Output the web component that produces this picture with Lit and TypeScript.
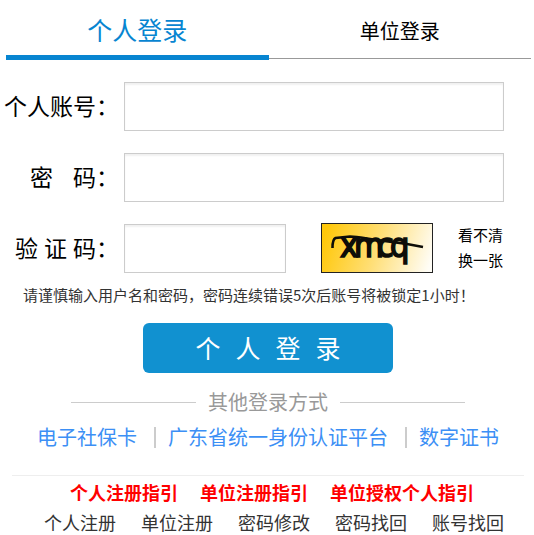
import { LitElement, html, css } from "lit";
import { customElement, state } from "lit/decorators.js";

@customElement("captcha-image")
class CaptchaImage extends LitElement {
  static styles = css`
    :host {
      display: block;
      width: 112px;
      height: 50px;
    }
    .picture {
      display: block;
      width: 100%;
      height: 100%;
    }
    .code {
      font-family: "DejaVu Sans Condensed", "DejaVu Sans", sans-serif;
      font-size: 34px;
      font-stretch: condensed;
      fill: #0d0d08;
      stroke: #0d0d08;
      stroke-width: 1.6;
    }
  `;

  render() {
    return html`
      <svg class="picture" viewBox="0 0 112 50" role="img" aria-label="验证码图片">
        <defs>
          <linearGradient id="gold" gradientUnits="userSpaceOnUse" x1="4" y1="10" x2="108" y2="44">
            <stop offset="0" stop-color="#ffc80a" />
            <stop offset="0.5" stop-color="#ffdf78" />
            <stop offset="1" stop-color="#fffdf6" />
          </linearGradient>
        </defs>
        <rect x="0.5" y="0.5" width="111" height="49" fill="url(#gold)" stroke="#222" />
        <text class="code" x="19 33 56 69" y="34">xmcq</text>
        <path
          d="M11.5 25 C11.5 20 12 16 14.5 15 L29 13.500 C38 13.500 44 15.500 56 17 L86 21 L102 24"
          fill="none"
          stroke="#0d0d08"
          stroke-width="2.6"
        />
      </svg>
    `;
  }
}

@customElement("app-root")
class AppRoot extends LitElement {
  @state() private tab = "person";

  static styles = css`
    :host {
      display: block;
      background: #fff;
      color: #000;
      font-family: "Noto Sans CJK SC", sans-serif;
    }
    * {
      box-sizing: border-box;
    }
    button {
      margin: 0;
      padding: 0;
      border: 0;
      background: none;
      color: inherit;
      font-family: inherit;
      cursor: pointer;
    }
    a {
      color: inherit;
      text-decoration: none;
      white-space: nowrap;
    }
    .tabs {
      display: flex;
      align-items: flex-start;
      height: 60px;
      padding: 0 3px 0 6px;
    }
    .tab {
      flex: 1;
      height: 59px;
      padding-top: 2px;
      border-bottom: 1px solid #999;
      font-size: 20px;
    }
    .tab.active {
      height: 60px;
      border-bottom: 5px solid #0785d1;
      color: #0785d1;
      font-size: 25px;
    }
    .form {
      display: flex;
      flex-direction: column;
      gap: 22px;
      padding: 22px 30px 0 5px;
    }
    .row {
      display: flex;
      align-items: center;
      height: 49px;
    }
    .label {
      display: flex;
      justify-content: flex-end;
      flex: none;
      width: 114px;
      margin-right: 5px;
      padding-bottom: 4px;
      font-size: 23px;
      line-height: 32px;
      white-space: nowrap;
    }
    .label.two {
      gap: 20px;
    }
    .label.three {
      gap: 6px;
    }
    .field {
      flex: 1;
      min-width: 0;
      height: 49px;
      padding: 0 10px;
      border: 1px solid #ccc;
      border-radius: 0;
      background: #fff;
      box-shadow: inset 0 2px 2px rgba(0, 0, 0, 0.06);
      font-family: inherit;
      font-size: 20px;
      outline: none;
    }
    .captcha {
      flex: none;
      align-self: flex-end;
      margin: 0 25px 0 35px;
    }
    .refresh {
      width: 46px;
      padding-bottom: 4px;
      font-size: 15px;
      line-height: 25px;
      text-align: left;
    }
    .notice {
      margin: 11px 0 17px;
      padding-left: 23px;
      color: #333;
      font-size: 15px;
      line-height: 22px;
    }
    .submit {
      display: flex;
      align-items: center;
      justify-content: center;
      gap: 15px;
      width: 250px;
      height: 50px;
      margin: 0 auto;
      padding-bottom: 2px;
      border-radius: 6px;
      background: #1191d0;
      color: #fff;
      font-size: 25px;
    }
    .action {
      padding-left: 2px;
    }
    .other {
      display: flex;
      align-items: center;
      gap: 12px;
      margin: 15px 0 7px;
      padding: 0 69px 0 71px;
      color: #999;
      font-size: 20px;
      line-height: 28px;
    }
    .other::before,
    .other::after {
      content: "";
      flex: 1;
      height: 1px;
      background: #ccc;
    }
    .methods {
      display: flex;
      justify-content: center;
      padding-left: 2px;
      color: #3c8ff5;
      font-size: 20px;
      line-height: 28px;
    }
    .method + .method::before {
      content: "";
      display: inline-block;
      width: 2px;
      height: 21px;
      margin: 0 12px 0 17px;
      background: #ccc;
      vertical-align: -3px;
    }
    .footer {
      margin: 24px 10px 0 12px;
      padding-top: 4px;
      border-top: 1px solid #eee;
    }
    .links {
      display: flex;
      justify-content: center;
      gap: 25px;
      padding-left: 12px;
      color: #333;
      font-size: 18px;
      line-height: 24px;
    }
    .links.guides {
      gap: 22px;
      margin-bottom: 6px;
      padding-left: 8px;
      color: #f00;
      font-weight: 700;
    }
  `;

  private renderTab(id: string, text: string) {
    const active = this.tab === id;
    return html`<button
      class="tab ${active ? "active" : ""}"
      role="tab"
      aria-selected=${active}
      @click=${() => (this.tab = id)}
    >${text}</button>`;
  }

  render() {
    return html`
      <div class="tabs" role="tablist">
        ${this.renderTab("person", "个人登录")}${this.renderTab("unit", "单位登录")}
      </div>
      <form @submit=${(e: Event) => e.preventDefault()}>
        <div class="form">
          <div class="row">
            <label class="label" for="account">个人账号：</label>
            <input class="field" id="account" type="text" />
          </div>
          <div class="row">
            <label class="label two" for="password"><span>密</span><span>码：</span></label>
            <input class="field" id="password" type="password" />
          </div>
          <div class="row">
            <label class="label three" for="code"><span>验</span><span>证</span><span>码：</span></label>
            <input class="field" id="code" type="text" />
            <captcha-image class="captcha"></captcha-image>
            <button class="refresh" type="button">看不清<br />换一张</button>
          </div>
        </div>
        <p class="notice">请谨慎输入用户名和密码，密码连续错误5次后账号将被锁定1小时！</p>
        <div class="action">
          <button class="submit" type="submit">
            <span>个</span><span>人</span><span>登</span><span>录</span>
          </button>
        </div>
      </form>
      <div class="other">其他登录方式</div>
      <div class="methods">
        ${["电子社保卡", "广东省统一身份认证平台", "数字证书"].map(
          (t) => html`<span class="method"><a href="#">${t}</a></span>`
        )}
      </div>
      <div class="footer">
        <div class="links guides">
          ${["个人注册指引", "单位注册指引", "单位授权个人指引"].map(
            (t) => html`<a href="#">${t}</a>`
          )}
        </div>
        <div class="links">
          ${["个人注册", "单位注册", "密码修改", "密码找回", "账号找回"].map(
            (t) => html`<a href="#">${t}</a>`
          )}
        </div>
      </div>
    `;
  }
}
